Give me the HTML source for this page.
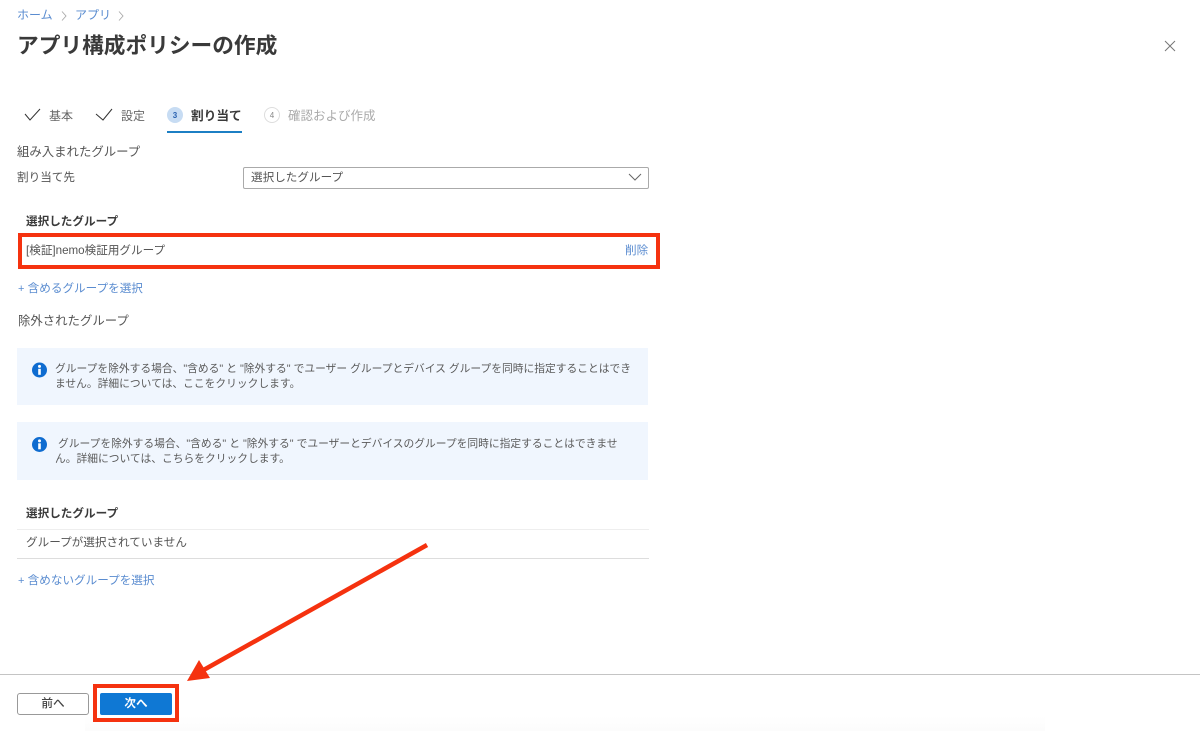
<!DOCTYPE html>
<html lang="ja"><head><meta charset="utf-8">
<style>
*{box-sizing:border-box;margin:0;padding:0}
html,body{width:1200px;height:731px;overflow:hidden;background:#fff}
body{position:relative;font-family:"Liberation Sans","Noto Sans CJK JP",sans-serif;font-size:12px;color:#555}
.t{position:absolute;white-space:nowrap;line-height:16px;font-size:11.6px}
.b{position:absolute}
.l{color:#5a8cd0}
.h{font-weight:700;color:#3a3a3a}
</style></head><body>
<div class="t l" style="left:17px;top:7px;font-size:12px">ホーム</div>
<div class="t l" style="left:75px;top:7px;font-size:12px">アプリ</div>
<svg class="b" style="left:60px;top:10px" width="70" height="14" fill="none" stroke="#aaa" stroke-width=".9"><path d="M2 1.5l4 4.5-4 4.5M59 1.5l4 4.5-4 4.5"/></svg>
<div class="t" style="left:17px;top:31px;font-size:21.7px;line-height:30px;font-weight:700;color:#3a3a3a">アプリ構成ポリシーの作成</div>
<svg class="b" style="left:1163px;top:39px" width="14" height="14" fill="none" stroke="#777" stroke-width="1"><path d="M2 2l10 10M12 2L2 12"/></svg>

<svg class="b" style="left:24px;top:108px" width="120" height="14" fill="none" stroke="#333" stroke-width="1"><path d="M1 6l5 6L16 1M72 6l7 6 9-11"/></svg>
<div class="t" style="left:49px;top:108px;font-size:12px;color:#666">基本</div>
<div class="t" style="left:121px;top:108px;font-size:12px;color:#666">設定</div>
<div class="b" style="left:167px;top:107px;width:16px;height:16px;border-radius:50%;background:#c7dcf3;color:#2a62b0;font-size:8px;font-weight:700;line-height:17px;text-align:center">3</div>
<div class="t h" style="left:191px;top:108px;font-size:12.7px">割り当て</div>
<div class="b" style="left:167px;top:131px;width:75px;height:2px;background:#1c7fc4"></div>
<div class="b" style="left:264px;top:107px;width:16px;height:16px;border-radius:50%;border:1px solid #ddd;color:#888;font-size:8px;line-height:15px;text-align:center">4</div>
<div class="t" style="left:288px;top:108px;font-size:12.5px;color:#aaa">確認および作成</div>

<div class="t" style="left:17px;top:144px;font-size:12.4px">組み入まれたグループ</div>
<div class="t" style="left:17px;top:170px">割り当て先</div>
<div class="b" style="left:243px;top:167px;width:406px;height:22px;border:1px solid #aaa;border-radius:2px"></div>
<div class="t" style="left:251px;top:170px">選択したグループ</div>
<svg class="b" style="left:628px;top:172px" width="14" height="10" fill="none" stroke="#666" stroke-width="1"><path d="M1 2l6 6 6-6"/></svg>

<div class="t h" style="left:26px;top:214px">選択したグループ</div>
<div class="t" style="left:26px;top:243px">[検証]nemo検証用グループ</div>
<div class="t l" style="left:625px;top:243px">削除</div>
<div class="b" style="left:18px;top:233px;width:642px;height:36px;border:4px solid #f5320f"></div>
<div class="t l" style="left:18px;top:281px"><span style="font-size:11px">+</span>&nbsp;含めるグループを選択</div>
<div class="t" style="left:18px;top:313px;font-size:12.4px">除外されたグループ</div>

<div class="b" style="left:17px;top:348px;width:631px;height:57px;background:#f0f6fe"></div>
<svg class="b" style="left:32px;top:362px" width="16" height="16"><circle cx="7.5" cy="8" r="7.5" fill="#0f6cd0"/><rect x="6.2" y="6.8" width="2.6" height="6" fill="#fff"/><circle cx="7.5" cy="4.4" r="1.5" fill="#fff"/></svg>
<div class="t" style="left:55px;top:362px;font-size:10.76px;line-height:14.5px;color:#5a5a5a">グループを除外する場合、"含める" と "除外する" でユーザー グループとデバイス グループを同時に指定することはでき<br>ません。詳細については、ここをクリックします。</div>

<div class="b" style="left:17px;top:422px;width:631px;height:58px;background:#f0f6fe"></div>
<svg class="b" style="left:32px;top:437px" width="16" height="16"><circle cx="7.5" cy="7.5" r="7.5" fill="#0f6cd0"/><rect x="6.2" y="6.3" width="2.6" height="6" fill="#fff"/><circle cx="7.5" cy="3.9" r="1.5" fill="#fff"/></svg>
<div class="t" style="left:55px;top:437px;font-size:10.76px;line-height:14.5px;color:#5a5a5a">&nbsp;グループを除外する場合、"含める" と "除外する" でユーザーとデバイスのグループを同時に指定することはできませ<br>ん。詳細については、こちらをクリックします。</div>

<div class="t h" style="left:26px;top:506px">選択したグループ</div>
<div class="b" style="left:17px;top:529px;width:632px;height:1px;background:#eee"></div>
<div class="t" style="left:26px;top:535px">グループが選択されていません</div>
<div class="b" style="left:17px;top:558px;width:632px;height:1px;background:#ddd"></div>
<div class="t l" style="left:18px;top:573px"><span style="font-size:11px">+</span>&nbsp;含めないグループを選択</div>

<div class="b" style="left:0;top:674px;width:1200px;height:1px;background:#c4c4c4"></div>
<div class="b" style="left:85px;top:716px;width:960px;height:15px;background:linear-gradient(#fff,#fcfcfc)"></div>
<div class="b" style="left:17px;top:693px;width:72px;height:22px;border:1px solid #999;border-radius:3px;background:#fff;text-align:center;line-height:20px;color:#444;font-weight:500;font-size:11.6px">前へ</div>
<div class="b" style="left:100px;top:693px;width:72px;height:22px;background:#0f78d4;border-radius:2px;text-align:center;line-height:22px;color:#fff;font-weight:700;font-size:11.6px">次へ</div>
<div class="b" style="left:93px;top:684px;width:86px;height:38px;border:4px solid #f5320f"></div>

<svg class="b" style="left:0;top:0;pointer-events:none" width="1200" height="731"><path d="M427 545L200 672" stroke="#f5320f" stroke-width="4.5" fill="none"/><path d="M187 681L199 660 210 678Z" fill="#f5320f"/></svg>
</body></html>
